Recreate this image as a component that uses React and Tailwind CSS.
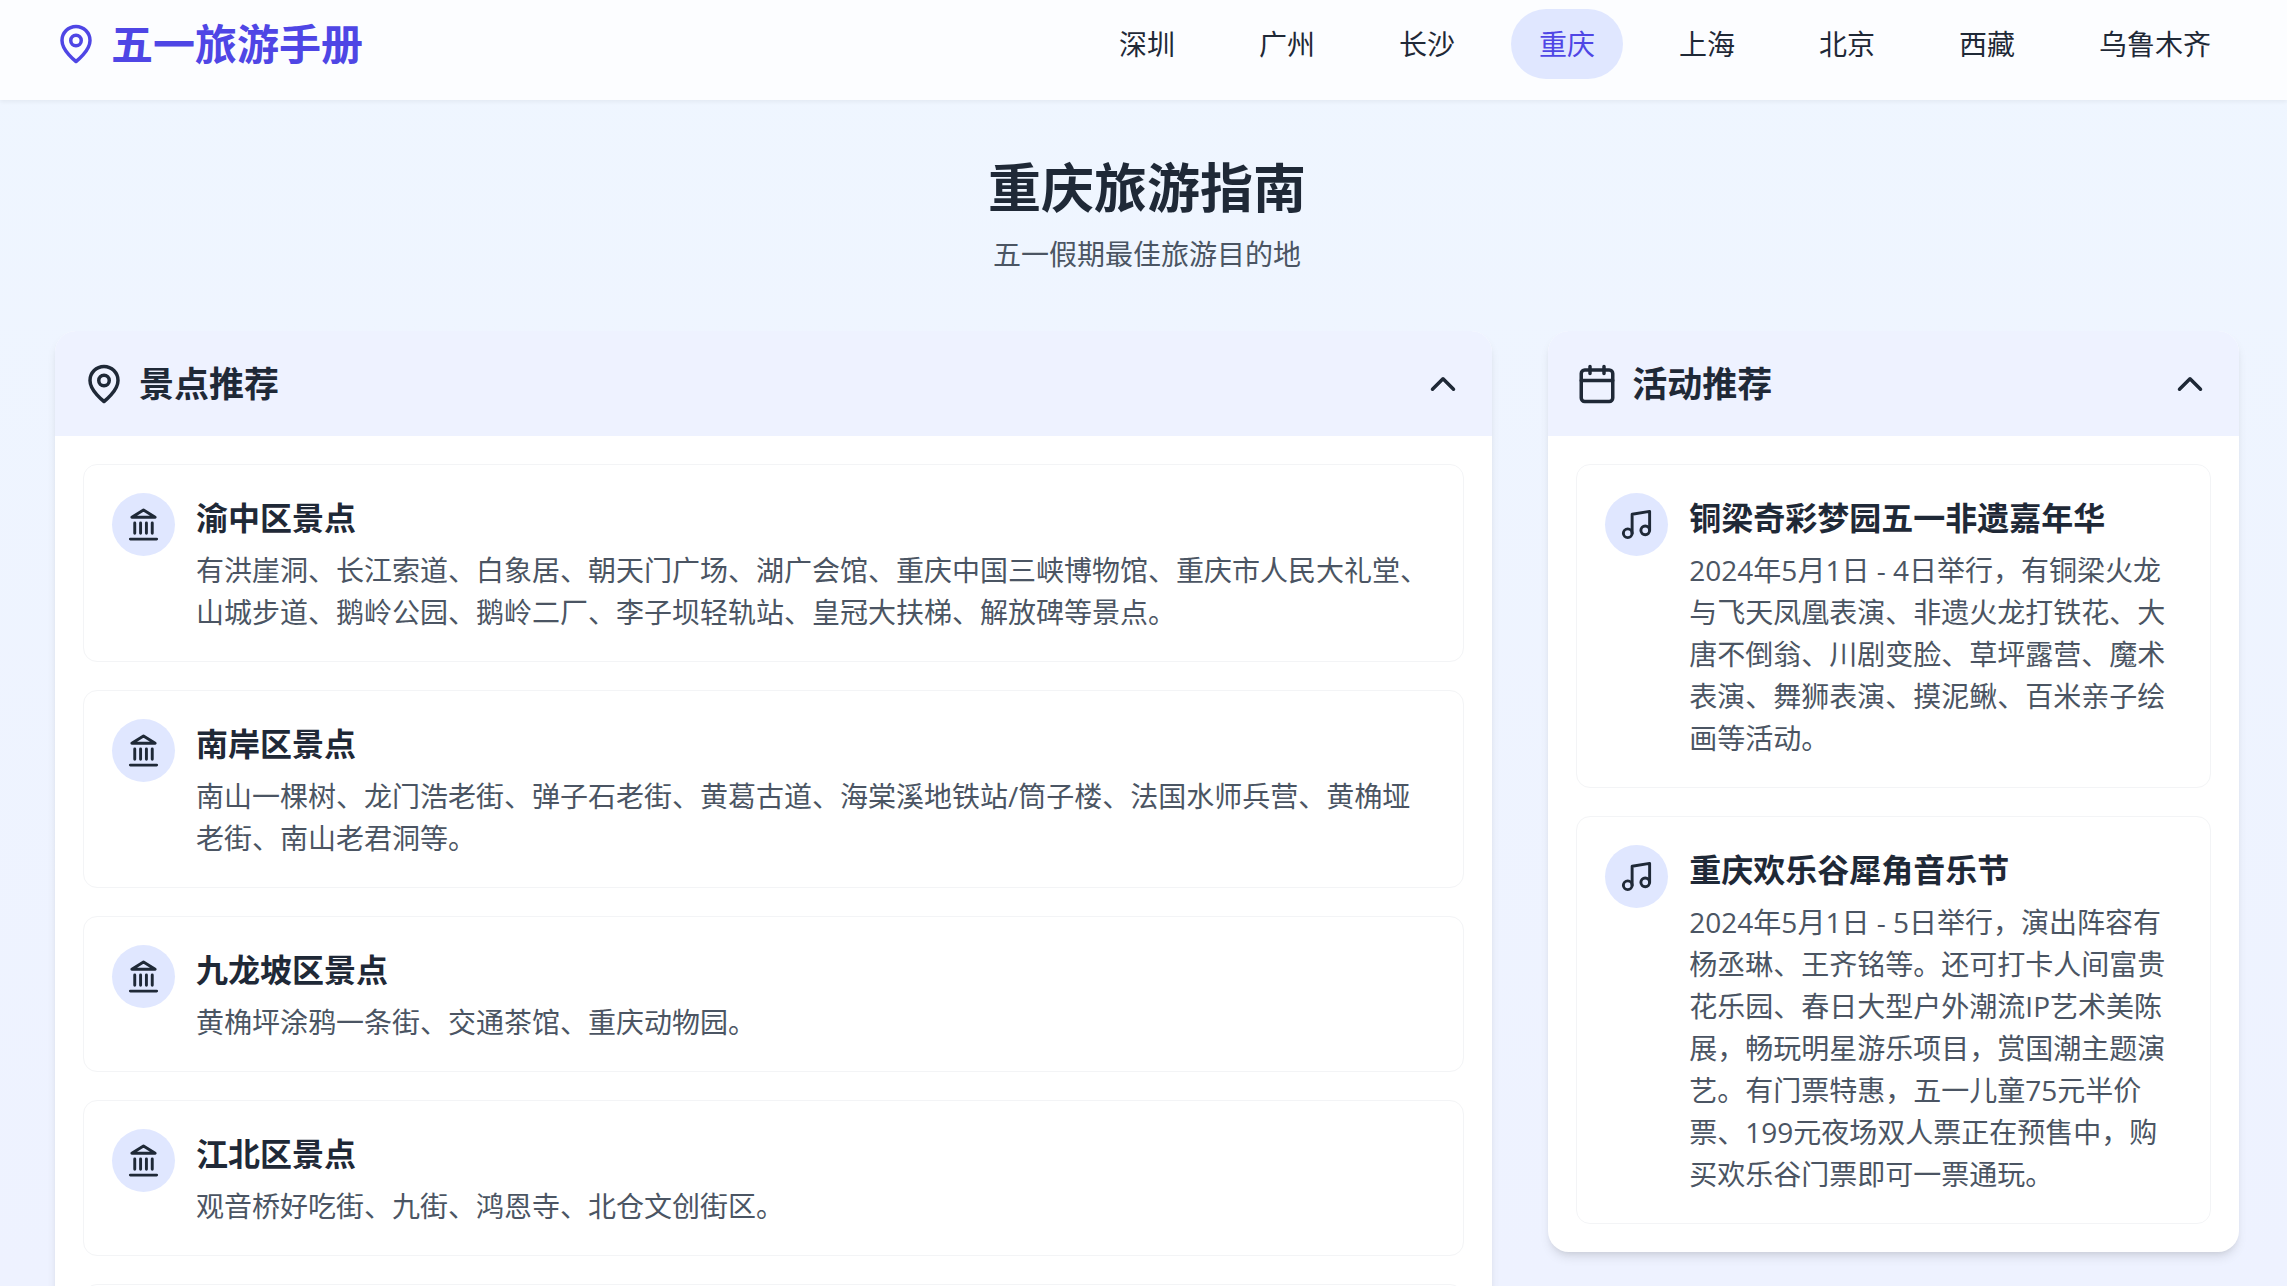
import { useState } from "react";

const cities = ["深圳", "广州", "长沙", "重庆", "上海", "北京", "西藏", "乌鲁木齐"];

const attractions = [
  {
    title: "渝中区景点",
    text: "有洪崖洞、长江索道、白象居、朝天门广场、湖广会馆、重庆中国三峡博物馆、重庆市人民大礼堂、山城步道、鹅岭公园、鹅岭二厂、李子坝轻轨站、皇冠大扶梯、解放碑等景点。",
  },
  {
    title: "南岸区景点",
    text: "南山一棵树、龙门浩老街、弹子石老街、黄葛古道、海棠溪地铁站/筒子楼、法国水师兵营、黄桷垭老街、南山老君洞等。",
  },
  { title: "九龙坡区景点", text: "黄桷坪涂鸦一条街、交通茶馆、重庆动物园。" },
  { title: "江北区景点", text: "观音桥好吃街、九街、鸿恩寺、北仓文创街区。" },
];

const events = [
  {
    title: "铜梁奇彩梦园五一非遗嘉年华",
    text: "2024年5月1日 - 4日举行，有铜梁火龙与飞天凤凰表演、非遗火龙打铁花、大唐不倒翁、川剧变脸、草坪露营、魔术表演、舞狮表演、摸泥鳅、百米亲子绘画等活动。",
  },
  {
    title: "重庆欢乐谷犀角音乐节",
    text: "2024年5月1日 - 5日举行，演出阵容有杨丞琳、王齐铭等。还可打卡人间富贵花乐园、春日大型户外潮流IP艺术美陈展，畅玩明星游乐项目，赏国潮主题演艺。有门票特惠，五一儿童75元半价票、199元夜场双人票正在预售中，购买欢乐谷门票即可一票通玩。",
  },
];

function Icon({ className, children }) {
  return (
    <svg
      className={className}
      viewBox="0 0 24 24"
      fill="none"
      stroke="currentColor"
      strokeWidth="2"
      strokeLinecap="round"
      strokeLinejoin="round"
      aria-hidden="true"
    >
      {children}
    </svg>
  );
}

function PinIcon() {
  return (
    <Icon className="size-[42px] shrink-0">
      <path d="M20 10c0 6-8 12-8 12s-8-6-8-12a8 8 0 0 1 16 0Z" />
      <circle cx="12" cy="10" r="3" />
    </Icon>
  );
}

function CalendarIcon() {
  return (
    <Icon className="size-[42px] shrink-0">
      <rect x="3" y="4" width="18" height="18" rx="2" ry="2" />
      <path d="M16 2v4M8 2v4M3 10h18" />
    </Icon>
  );
}

function LandmarkIcon() {
  return (
    <Icon className="size-[35px]">
      <path d="M3 22h18M6 18v-7M10 18v-7M14 18v-7M18 18v-7" />
      <path d="M12 2l8 5H4z" />
    </Icon>
  );
}

function MusicIcon() {
  return (
    <Icon className="size-[35px]">
      <path d="M9 18V5l12-2v13" />
      <circle cx="6" cy="18" r="3" />
      <circle cx="18" cy="16" r="3" />
    </Icon>
  );
}

function Section({ icon, title, className, children }) {
  const [open, setOpen] = useState(true);
  return (
    <section
      className={
        "overflow-hidden rounded-[21px] bg-white shadow-[0_7px_11px_-2px_rgba(0,0,0,0.1),0_4px_7px_-4px_rgba(0,0,0,0.1)] " +
        className
      }
    >
      <button
        type="button"
        aria-expanded={open}
        onClick={() => setOpen(!open)}
        className="flex w-full items-center justify-between bg-[#eef2ff] p-7 text-left"
      >
        <span className="flex items-center gap-3.5">
          {icon}
          <span className="text-[35px] leading-[49px] font-bold">{title}</span>
        </span>
        <Icon className={open ? "size-[42px]" : "size-[42px] rotate-180"}>
          <path d="m18 15-6-6-6 6" />
        </Icon>
      </button>
      {open && <div className="flex flex-col gap-7 p-7">{children}</div>}
    </section>
  );
}

function Item({ icon, title, text }) {
  return (
    <article className="flex items-start gap-[21px] rounded-[14px] border border-gray-100 p-7">
      <div className="shrink-0 rounded-full bg-[#e0e7ff] p-3.5">{icon}</div>
      <div className="min-w-0 flex-1">
        <h3 className="mb-[7px] text-[32px] leading-[49px] font-bold">{title}</h3>
        <p className="text-[28px] leading-[42px] text-[#4b5563]">{text}</p>
      </div>
    </article>
  );
}

export default function App() {
  const [city, setCity] = useState("重庆");
  return (
    <div
      lang="zh-CN"
      className="h-screen overflow-hidden bg-linear-to-b from-[#eff6ff] to-[#eef2ff] font-['Open_Sans','Noto_Sans_CJK_SC',sans-serif] text-[#1f2937]"
    >
      <header className="bg-white/80 pt-[9px] pr-12 pb-[21px] pl-[55px] shadow-[0_2px_4px_0_rgba(0,0,0,0.05)]">
        <div className="flex items-center justify-between">
          <div className="flex items-center gap-3.5 text-[#4f46e5]">
            <PinIcon />
            <span className="text-[42px] leading-[56px] font-bold">五一旅游手册</span>
          </div>
          <nav className="flex gap-7">
            {cities.map((name) => (
              <button
                key={name}
                type="button"
                onClick={() => setCity(name)}
                className={
                  name === city
                    ? "rounded-full bg-[#e0e7ff] px-7 py-3.5 text-[28px] leading-[42px] text-[#4f46e5]"
                    : "rounded-full px-7 py-3.5 text-[28px] leading-[42px]"
                }
              >
                {name}
              </button>
            ))}
          </nav>
        </div>
      </header>

      <main className="pt-14 pr-12 pl-[55px]">
        <div className="mb-14 text-center">
          <h1 className="mb-3.5 text-[53px] leading-[63px] font-bold">重庆旅游指南</h1>
          <p className="text-[28px] leading-[42px] text-[#4b5563]">五一假期最佳旅游目的地</p>
        </div>

        <div className="grid grid-cols-3 items-start gap-14">
          <Section icon={<PinIcon />} title="景点推荐" className="col-span-2">
            {attractions.map((a) => (
              <Item key={a.title} icon={<LandmarkIcon />} title={a.title} text={a.text} />
            ))}
            <div className="h-28 rounded-[14px] border border-gray-100" />
          </Section>
          <Section icon={<CalendarIcon />} title="活动推荐" className="col-span-1">
            {events.map((e) => (
              <Item key={e.title} icon={<MusicIcon />} title={e.title} text={e.text} />
            ))}
          </Section>
        </div>
      </main>
    </div>
  );
}
